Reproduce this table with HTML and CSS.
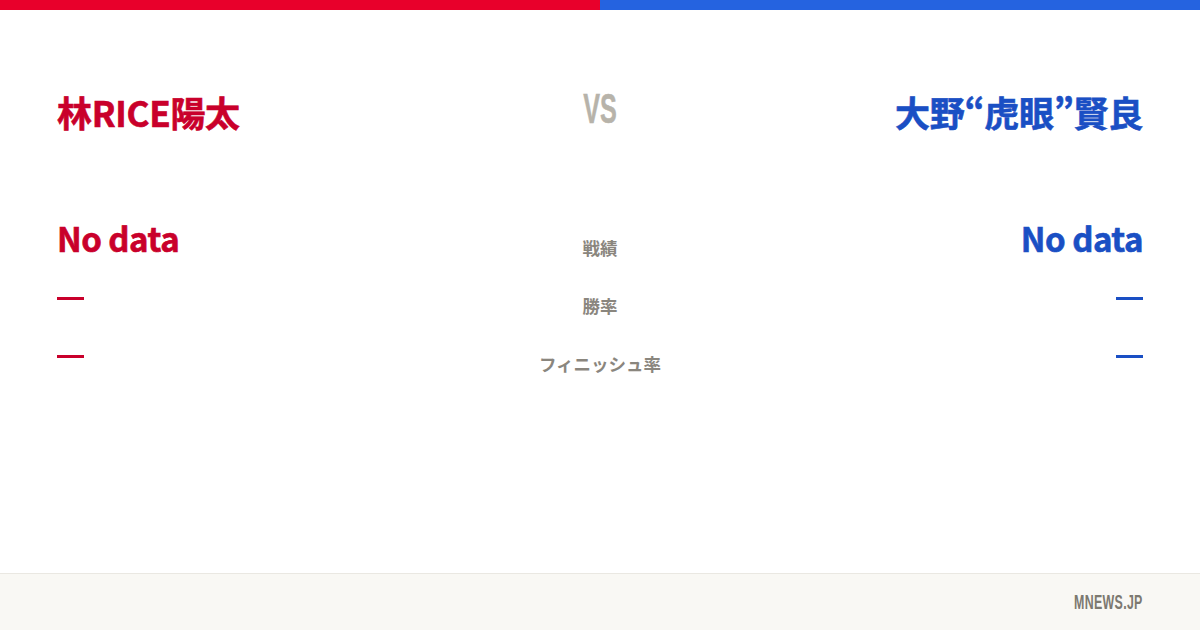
FILE: index.html
```html
<!DOCTYPE html>
<html lang="ja">
<head>
<meta charset="utf-8">
<link rel="stylesheet" href="styles.css">
</head>
<body>
<div class="page">
  <div class="topbar"><div class="bar-red"></div><div class="bar-blue"></div></div>
  <main class="main">
    <div class="row head">
      <div class="name red">林RICE陽太</div>
      <div class="vs"><span>VS</span></div>
      <div class="name blue right">大野“虎眼”賢良</div>
    </div>
    <div class="stats">
      <div class="row stat">
        <div class="val big red">No data</div>
        <div class="label">戦績</div>
        <div class="val big blue right">No data</div>
      </div>
      <div class="row stat">
        <div class="val red"><span class="dash"></span></div>
        <div class="label">勝率</div>
        <div class="val blue right"><span class="dash"></span></div>
      </div>
      <div class="row stat">
        <div class="val red"><span class="dash"></span></div>
        <div class="label">フィニッシュ率</div>
        <div class="val blue right"><span class="dash"></span></div>
      </div>
    </div>
  </main>
  <footer class="footer"><span class="brand">MNEWS.JP</span></footer>
</div>
</body>
</html>
```
FILE: styles.css
```css
html, body { margin: 0; padding: 0; background: #fff; }
body { font-family: "Noto Sans CJK JP", "Noto Sans", sans-serif; }
.page { width: 1200px; height: 630px; display: flex; flex-direction: column; overflow: hidden; }
.topbar { height: 10px; display: flex; flex: none; }
.bar-red { flex: 1; background: #e8002b; }
.bar-blue { flex: 1; background: #2563e0; }
.main { flex: 1; padding: 77px 57px 0; }
.row { display: grid; grid-template-columns: 1fr 240px 1fr; align-items: center; }
.head { height: 50px; }
.name { font-size: 35px; font-weight: 700; line-height: 50px; white-space: nowrap; letter-spacing: -0.3px; -webkit-text-stroke: 0.6px currentColor; }
.red { color: #c9002b; }
.blue { color: #1a4fc4; }
.right { text-align: right; }
.vs { text-align: center; height: 50px; display: flex; justify-content: center; align-items: flex-start; }
.vs span { display: inline-block; font-family: "Liberation Sans", sans-serif; font-weight: 700; font-size: 42px; line-height: 50px; color: #b7b3aa; transform: scaleX(0.6); margin-top: -3px; -webkit-text-stroke: 0.5px currentColor; }
.stats { margin-top: 72px; }
.stat { height: 58px; }
.val { font-weight: 700; line-height: 40px; }
.big { font-size: 33px; letter-spacing: -0.5px; -webkit-text-stroke: 0.6px currentColor; }
.dash { display: inline-block; width: 27px; height: 3px; background: currentColor; vertical-align: middle; }
.label { text-align: center; font-size: 17.5px; font-weight: 700; color: #8a867e; margin-top: 20px; line-height: 24px; }
.footer { height: 56px; flex: none; border-top: 1px solid #eae8e2; background: #f9f8f4; display: flex; align-items: center; justify-content: flex-end; padding-right: 57px; }
.brand { display: inline-block; font-family: "Liberation Sans", sans-serif; font-weight: 700; font-size: 20px; color: #7c7970; transform: scaleX(0.62); transform-origin: right center; letter-spacing: 0.5px; }
```
